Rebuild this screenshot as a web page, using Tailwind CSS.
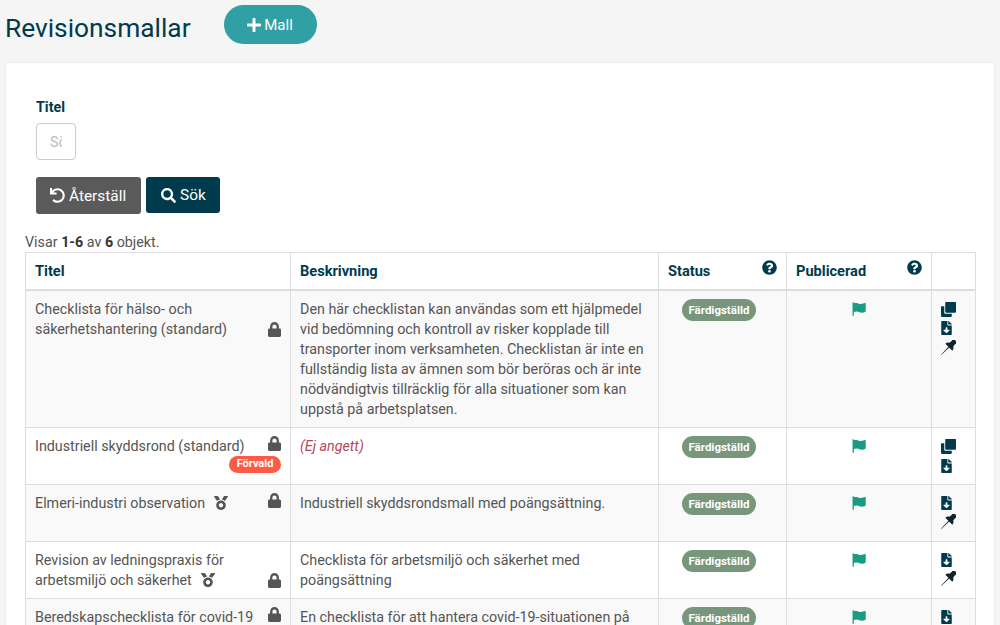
<!DOCTYPE html>
<html lang="sv">
<head>
  <meta charset="UTF-8" />
  <title>Revisionsmallar</title>
  <script src="https://cdn.jsdelivr.net/npm/@tailwindcss/browser@4"></script>
</head>
<body class="bg-[#f5f5f5] h-[625px] overflow-hidden font-['Roboto',sans-serif] text-[14.3px] leading-[20px] text-[#555]">

  <svg class="hidden">
    <symbol id="i-lock" viewBox="0 0 448 512"><path fill="currentColor" d="M400 224h-24v-72C376 68.2 307.8 0 224 0S72 68.2 72 152v72H48c-26.5 0-48 21.5-48 48v192c0 26.5 21.5 48 48 48h352c26.5 0 48-21.5 48-48V272c0-26.5-21.5-48-48-48zm-104 0H152v-72c0-39.7 32.3-72 72-72s72 32.3 72 72v72z"/></symbol>
    <symbol id="i-help" viewBox="0 0 512 512"><path fill="currentColor" d="M504 256c0 136.997-111.043 248-248 248S8 392.997 8 256C8 119.083 119.043 8 256 8s248 111.083 248 248zM262.655 90c-54.497 0-89.255 22.957-116.549 63.758-3.536 5.286-2.353 12.415 2.715 16.258l34.699 26.31c5.205 3.947 12.621 3.008 16.665-2.122 17.864-22.658 30.113-35.797 57.303-35.797 20.429 0 45.698 13.148 45.698 32.958 0 14.976-12.363 22.667-32.534 33.976C247.128 238.528 216 254.941 216 296v4c0 6.627 5.373 12 12 12h56c6.627 0 12-5.373 12-12v-1.333c0-28.462 83.186-29.647 83.186-106.667 0-58.002-60.165-102-116.531-102zM256 338c-25.365 0-46 20.635-46 46 0 25.364 20.635 46 46 46s46-20.636 46-46c0-25.365-20.635-46-46-46z"/></symbol>
    <symbol id="i-flag" viewBox="0 0 512 512"><path fill="currentColor" d="M20 10h48v490H20zM68 50c40-22 90-22 130-8s90 34 140 28 90-20 130-36c16-6 34 4 34 20v280c0 10-6 18-14 24-40 26-94 40-144 34s-90-28-130-38-98-6-146 14z"/></symbol>
    <symbol id="i-copy" viewBox="0 0 512 512"><path fill="currentColor" d="M176 0h304c18 0 32 14 32 32v304c0 18-14 32-32 32H176c-18 0-32-14-32-32V32c0-18 14-32 32-32zM112 144v224c0 18 14 32 32 32h224v80c0 18-14 32-32 32H32c-18 0-32-14-32-32V176c0-18 14-32 32-32z"/></symbol>
    <symbol id="i-file" viewBox="0 0 384 512"><path fill="currentColor" d="M224 136V0H24C10.7 0 0 10.7 0 24v464c0 13.3 10.7 24 24 24h336c13.3 0 24-10.7 24-24V160H248c-13.2 0-24-10.8-24-24zm76.45 211.36l-96.42 95.7c-6.65 6.61-17.39 6.61-24.04 0l-96.42-95.7C73.42 337.29 80.54 320 94.82 320H160v-80c0-8.84 7.16-16 16-16h32c8.84 0 16 7.16 16 16v80h65.18c14.28 0 21.4 17.29 11.27 27.36zM377 105L279.1 7c-4.5-4.5-10.6-7-17-7H256v128h128v-6.1c0-6.3-2.5-12.4-7-16.9z"/></symbol>
    <symbol id="i-pin" viewBox="0 0 512 512"><g transform="rotate(45 256 256)"><path fill="currentColor" d="M150-80h212v80h-30l16 120c40 18 76 56 76 120H88c0-64 36-102 76-120l16-120h-30zM238 230h36l-10 382h-16z"/></g></symbol>
    <symbol id="i-medal" viewBox="0 0 512 512"><path fill="currentColor" d="M223.75 130.75L154.62 15.54A31.997 31.997 0 0 0 127.18 0H16.03C3.08 0-4.5 14.57 2.92 25.18l111.27 158.96c29.72-27.77 67.52-46.83 109.56-53.39zM495.97 0H384.82c-11.24 0-21.66 5.9-27.44 15.54l-69.13 115.21c42.04 6.56 79.84 25.62 109.56 53.38L509.08 25.18C516.5 14.57 508.92 0 495.97 0zM256 160c-97.2 0-176 78.8-176 176s78.8 176 176 176 176-78.8 176-176-78.8-176-176-176zm0 96c44 0 80 36 80 80s-36 80-80 80-80-36-80-80 36-80 80-80z"/></symbol>
  </svg>

  <header class="flex items-start h-[62px] pl-[5px]">
    <h1 class="mt-[10px] text-[26.3px] leading-[36px] text-[#003b4d]">Revisionsmallar</h1>
    <button class="mt-[5px] ml-[33px] flex items-center justify-center w-[93px] h-[39px] rounded-[20px] bg-[#31a0a5] text-white text-[15px]">
      <svg class="w-[14px] h-[16px] mr-[3px]" viewBox="0 0 448 512"><path fill="currentColor" d="M416 208H272V64c0-17.67-14.33-32-32-32h-32c-17.67 0-32 14.33-32 32v144H32c-17.67 0-32 14.33-32 32v32c0 17.67 14.33 32 32 32h144v144c0 17.67 14.33 32 32 32h32c17.67 0 32-14.33 32-32V304h144c17.67 0 32-14.33 32-32v-32c0-17.67-14.33-32-32-32z"/></svg>
      Mall
    </button>
  </header>

  <main class="mx-[5px] bg-white border border-[#ebebf0] h-[600px] pl-[19px] pr-[18px]">
    <form class="pl-[11px] pt-[34px]">
      <label class="block font-bold text-[#003b4d] leading-[20px]">Titel</label>
      <input placeholder="Sök titel" class="block mt-[6px] w-[40px] h-[37px] px-[13px] border border-[#ccc] rounded-[4px] bg-white text-[14.3px] placeholder:text-[#bbb]" />
      <div class="flex mt-[17px] gap-[5px] items-start">
        <button type="button" class="flex items-center h-[37px] w-[105px] pl-[14px] rounded-[3px] bg-[#5a5a5a] text-white text-[15.4px]">
          <svg class="w-[15px] h-[15px] mr-[4px]" viewBox="0 0 512 512"><path fill="currentColor" d="M212.333 224.333H12c-6.627 0-12-5.373-12-12V12C0 5.373 5.373 0 12 0h48c6.627 0 12 5.373 12 12v78.112C117.773 39.279 184.26 7.47 258.175 8.007c136.906.994 246.448 111.623 246.157 248.532C504.041 393.258 393.12 504 256.333 504c-64.089 0-122.496-24.313-166.51-64.215-5.099-4.622-5.334-12.554-.467-17.42l33.967-33.967c4.474-4.474 11.662-4.717 16.401-.525C170.76 415.336 211.58 432 256.333 432c97.268 0 176-78.716 176-176 0-97.267-78.716-176-176-176-58.496 0-110.28 28.476-142.274 72.333h98.274c6.627 0 12 5.373 12 12v48c0 6.627-5.373 12-12 12z"/></svg>
          Återställ
        </button>
        <button type="button" class="flex items-center h-[36px] w-[74px] pl-[15px] rounded-[3px] bg-[#003b4d] text-white text-[15.4px]">
          <svg class="w-[15px] h-[15px] mr-[4px]" viewBox="0 0 512 512"><path fill="currentColor" d="M505 442.7L405.3 343c-4.5-4.5-10.6-7-17-7H372c27.6-35.3 44-79.7 44-128C416 93.1 322.9 0 208 0S0 93.1 0 208s93.1 208 208 208c48.3 0 92.7-16.4 128-44v16.3c0 6.4 2.5 12.5 7 17l99.7 99.7c9.4 9.4 24.6 9.4 33.9 0l28.3-28.3c9.4-9.4 9.4-24.6.1-34zM208 336c-70.7 0-128-57.2-128-128 0-70.7 57.2-128 128-128 70.7 0 128 57.2 128 128 0 70.7-57.2 128-128 128z"/></svg>
          Sök
        </button>
      </div>
    </form>

    <p class="mt-[18px] h-[20px]">Visar <b class="text-[#333]">1-6</b> av <b class="text-[#333]">6</b> objekt.</p>

    <table class="table-fixed w-[950px] border-collapse border border-[#ddd]">
      <colgroup>
        <col class="w-[265px]" /><col class="w-[368px]" /><col class="w-[128px]" /><col class="w-[145px]" /><col class="w-[44px]" />
      </colgroup>
      <thead class="text-[#003b4d] font-bold text-left text-[14.6px]">
        <tr class="h-[37px]">
          <th class="border border-[#ddd] border-b-2 px-[9px] align-middle">Titel</th>
          <th class="border border-[#ddd] border-b-2 px-[9px] align-middle">Beskrivning</th>
          <th class="border border-[#ddd] border-b-2 px-[9px] align-middle">
            <div class="flex justify-between items-start"><span class="pt-[1px]">Status</span><svg class="w-[15px] h-[15px]"><use href="#i-help" /></svg></div>
          </th>
          <th class="border border-[#ddd] border-b-2 px-[9px] align-middle">
            <div class="flex justify-between items-start"><span class="pt-[1px]">Publicerad</span><svg class="w-[15px] h-[15px]"><use href="#i-help" /></svg></div>
          </th>
          <th class="border border-[#ddd] border-b-2"></th>
        </tr>
      </thead>
      <tbody>
        <tr class="bg-[#f9f9f9]">
          <td class="border border-[#ddd] px-[9px] py-[8px] align-top">
            <div class="flex justify-between items-end">
              <span class="w-[210px]">Checklista för hälso- och säkerhetshantering (standard)</span>
              <svg class="w-[13px] h-[15px] mb-[2px] text-[#555]"><use href="#i-lock" /></svg>
            </div>
          </td>
          <td class="border border-[#ddd] px-[9px] py-[8px] align-top">Den här checklistan kan användas som ett hjälpmedel vid bedömning och kontroll av risker kopplade till transporter inom verksamheten. Checklistan är inte en fullständig lista av ämnen som bör beröras och är inte nödvändigtvis tillräcklig för alla situationer som kan uppstå på arbetsplatsen.</td>
          <td class="border border-[#ddd] pl-[23px] py-[8px] align-top">
            <span class="flex w-[74px] h-[22px] items-center justify-center rounded-full bg-[#77967c] text-white text-[11.5px] font-bold">Färdigställd</span>
          </td>
          <td class="border border-[#ddd] py-[8px] align-top"><svg class="w-[14px] h-[14px] mx-auto mt-[3px] text-[#1a9c82]"><use href="#i-flag" /></svg></td>
          <td class="border border-[#ddd] pl-[9px] py-[8px] align-top">
            <div class="flex flex-col gap-[4px] text-[#003b4d] pt-[3px]">
              <svg class="w-[15px] h-[15px]"><use href="#i-copy" /></svg>
              <svg class="w-[11px] h-[14px]"><use href="#i-file" /></svg>
              <svg class="w-[15px] h-[15px] mt-[1px] text-[#11232b]"><use href="#i-pin" /></svg>
            </div>
          </td>
        </tr>
        <tr class="bg-white">
          <td class="border border-[#ddd] px-[9px] py-[8px] align-top h-[57px]">
            <div class="flex justify-between items-start">
              <span>Industriell skyddsrond (standard)</span>
              <svg class="w-[13px] h-[15px] text-[#555]"><use href="#i-lock" /></svg>
            </div>
            <div class="flex justify-end"><span class="flex items-center justify-center w-[52px] h-[17px] rounded-full bg-[#ff5a45] text-white text-[11px] font-bold">Förvald</span></div>
          </td>
          <td class="border border-[#ddd] px-[9px] py-[8px] align-top italic text-[#b5485d]">(Ej angett)</td>
          <td class="border border-[#ddd] pl-[23px] py-[8px] align-top">
            <span class="flex w-[74px] h-[22px] items-center justify-center rounded-full bg-[#77967c] text-white text-[11.5px] font-bold">Färdigställd</span>
          </td>
          <td class="border border-[#ddd] py-[8px] align-top"><svg class="w-[14px] h-[14px] mx-auto mt-[3px] text-[#1a9c82]"><use href="#i-flag" /></svg></td>
          <td class="border border-[#ddd] pl-[9px] py-[8px] align-top">
            <div class="flex flex-col gap-[5px] text-[#003b4d] pt-[3px]">
              <svg class="w-[15px] h-[15px]"><use href="#i-copy" /></svg>
              <svg class="w-[11px] h-[14px]"><use href="#i-file" /></svg>
            </div>
          </td>
        </tr>
        <tr class="bg-[#f9f9f9]">
          <td class="border border-[#ddd] px-[9px] py-[8px] align-top h-[57px]">
            <div class="flex justify-between items-start">
              <span class="flex items-center gap-[9px]">Elmeri-industri observation <svg class="w-[14px] h-[14px] text-[#555]"><use href="#i-medal" /></svg></span>
              <svg class="w-[13px] h-[15px] text-[#555]"><use href="#i-lock" /></svg>
            </div>
          </td>
          <td class="border border-[#ddd] px-[9px] py-[8px] align-top">Industriell skyddsrondsmall med poängsättning.</td>
          <td class="border border-[#ddd] pl-[23px] py-[8px] align-top">
            <span class="flex w-[74px] h-[22px] items-center justify-center rounded-full bg-[#77967c] text-white text-[11.5px] font-bold">Färdigställd</span>
          </td>
          <td class="border border-[#ddd] py-[8px] align-top"><svg class="w-[14px] h-[14px] mx-auto mt-[3px] text-[#1a9c82]"><use href="#i-flag" /></svg></td>
          <td class="border border-[#ddd] pl-[9px] py-[8px] align-top">
            <div class="flex flex-col gap-[4px] text-[#003b4d] pt-[3px]">
              <svg class="w-[11px] h-[14px]"><use href="#i-file" /></svg>
              <svg class="w-[15px] h-[15px] text-[#11232b]"><use href="#i-pin" /></svg>
            </div>
          </td>
        </tr>
        <tr class="bg-white">
          <td class="border border-[#ddd] px-[9px] py-[8px] align-top h-[57px]">
            <div class="flex justify-between items-end">
              <span class="w-[210px]">Revision av ledningspraxis för arbetsmiljö och säkerhet <svg class="inline w-[14px] h-[14px] ml-[6px] align-[-2px] text-[#555]"><use href="#i-medal" /></svg></span>
              <svg class="w-[13px] h-[15px] mb-[2px] text-[#555]"><use href="#i-lock" /></svg>
            </div>
          </td>
          <td class="border border-[#ddd] px-[9px] py-[8px] align-top">Checklista för arbetsmiljö och säkerhet med poängsättning</td>
          <td class="border border-[#ddd] pl-[23px] py-[8px] align-top">
            <span class="flex w-[74px] h-[22px] items-center justify-center rounded-full bg-[#77967c] text-white text-[11.5px] font-bold">Färdigställd</span>
          </td>
          <td class="border border-[#ddd] py-[8px] align-top"><svg class="w-[14px] h-[14px] mx-auto mt-[3px] text-[#1a9c82]"><use href="#i-flag" /></svg></td>
          <td class="border border-[#ddd] pl-[9px] py-[8px] align-top">
            <div class="flex flex-col gap-[4px] text-[#003b4d] pt-[3px]">
              <svg class="w-[11px] h-[14px]"><use href="#i-file" /></svg>
              <svg class="w-[15px] h-[15px] text-[#11232b]"><use href="#i-pin" /></svg>
            </div>
          </td>
        </tr>
        <tr class="bg-[#f9f9f9]">
          <td class="border border-[#ddd] px-[9px] py-[8px] align-top h-[57px]">
            <div class="flex justify-between items-start">
              <span>Beredskapschecklista för covid-19</span>
              <svg class="w-[13px] h-[15px] text-[#555]"><use href="#i-lock" /></svg>
            </div>
          </td>
          <td class="border border-[#ddd] px-[9px] py-[8px] align-top">En checklista för att hantera covid-19-situationen på arbetsplatsen</td>
          <td class="border border-[#ddd] pl-[23px] py-[8px] align-top">
            <span class="flex w-[74px] h-[22px] items-center justify-center rounded-full bg-[#77967c] text-white text-[11.5px] font-bold">Färdigställd</span>
          </td>
          <td class="border border-[#ddd] py-[8px] align-top"><svg class="w-[14px] h-[14px] mx-auto mt-[3px] text-[#1a9c82]"><use href="#i-flag" /></svg></td>
          <td class="border border-[#ddd] pl-[9px] py-[8px] align-top">
            <div class="flex flex-col gap-[4px] text-[#003b4d] pt-[3px]">
              <svg class="w-[11px] h-[14px]"><use href="#i-file" /></svg>
              <svg class="w-[15px] h-[15px] text-[#11232b]"><use href="#i-pin" /></svg>
            </div>
          </td>
        </tr>
      </tbody>
    </table>
  </main>
</body>
</html>
